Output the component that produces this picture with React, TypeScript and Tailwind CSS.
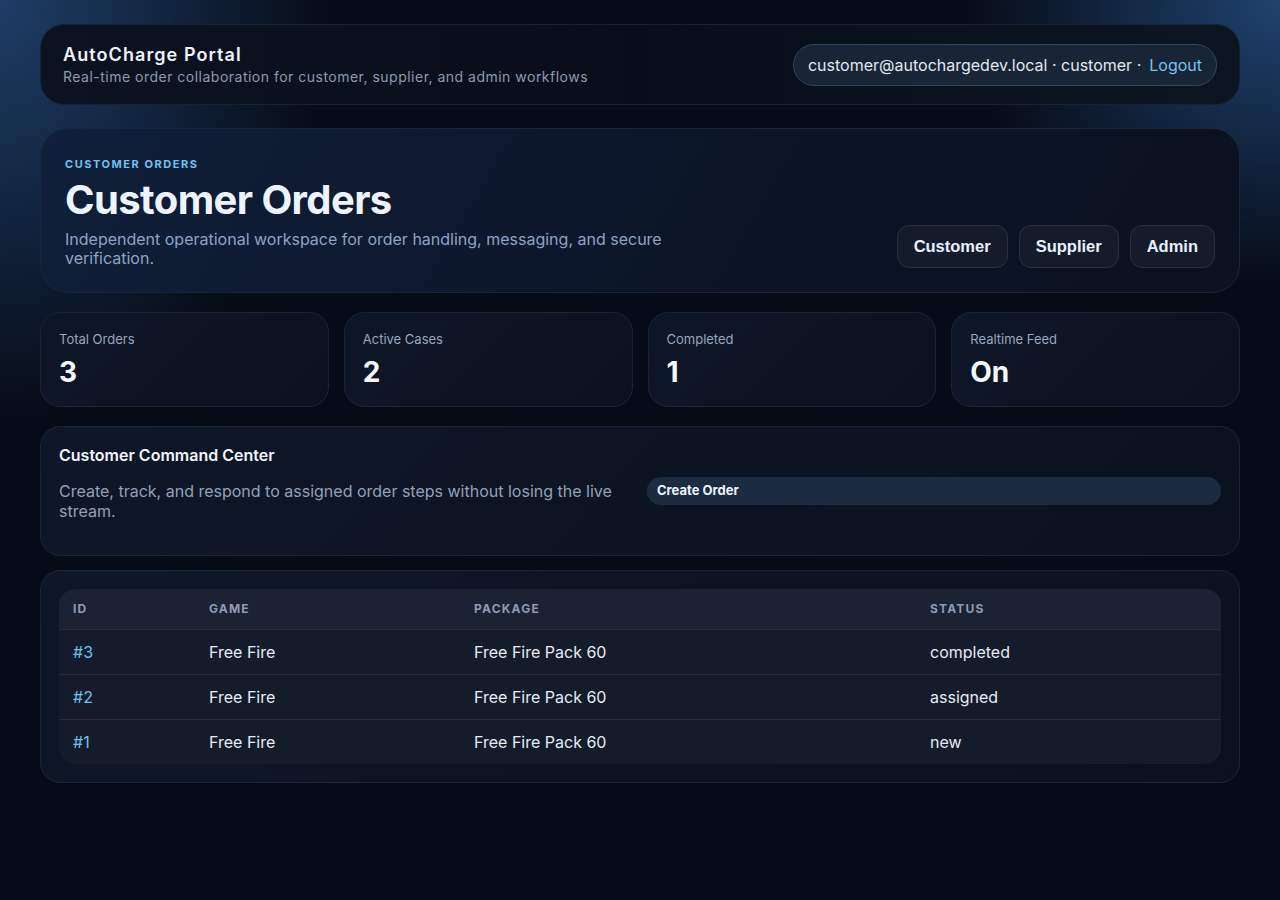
const stats = [
  { label: 'Total Orders', value: '3' },
  { label: 'Active Cases', value: '2' },
  { label: 'Completed', value: '1' },
  { label: 'Realtime Feed', value: 'On' },
]

const orders = [
  { id: '#3', game: 'Free Fire', pack: 'Free Fire Pack 60', status: 'completed' },
  { id: '#2', game: 'Free Fire', pack: 'Free Fire Pack 60', status: 'assigned' },
  { id: '#1', game: 'Free Fire', pack: 'Free Fire Pack 60', status: 'new' },
]

const card =
  'border border-[#1a2436] bg-[linear-gradient(135deg,#0e1729,#0a111e)]'

export default function App() {
  return (
    <div
      className="min-h-screen bg-[#060c17] bg-[radial-gradient(ellipse_440px_560px_at_0%_0%,rgba(34,70,116,0.85),transparent_75%),radial-gradient(ellipse_420px_380px_at_100%_0%,rgba(34,72,120,0.9),transparent_75%)] px-10 pt-6 pb-10 text-[#e2e8f0]"
      style={{ fontFamily: 'Inter, "Noto Sans", sans-serif' }}
    >
      {/* Top bar */}
      <header className="flex h-[81px] items-center justify-between rounded-[24px] border border-[#182233] bg-[linear-gradient(90deg,#0b1321,#070e19_50%,#0c1522)] pl-[22px] pr-[22px]">
        <div>
          <div className="text-[18px] font-semibold leading-6 tracking-[0.06em] text-[#eef3fb]">
            AutoCharge Portal
          </div>
          <div className="text-[14px] leading-5 tracking-[0.035em] text-[#8d9ab0]">
            Real-time order collaboration for customer, supplier, and admin workflows
          </div>
        </div>
        <div className="flex h-[42px] items-center rounded-full border border-[#2b4860] bg-[#172536] px-[14px] text-[16px] text-[#e2e8f0]">
          customer@autochargedev.local · customer ·
          <span className="ml-[8px] text-[#76c2ee]">Logout</span>
        </div>
      </header>

      {/* Hero */}
      <section className="mt-[23px] flex h-[165px] items-end justify-between rounded-[28px] border border-[#1a2538] bg-[linear-gradient(120deg,#10203a,#0b1426_60%,#0a1221)] px-[24px] pb-[24px]">
        <div className="max-w-[640px]">
          <div className="text-[11px] font-bold uppercase leading-4 tracking-[0.14em] text-[#6cc3f0]">
            Customer Orders
          </div>
          <h1 className="mt-[6px] text-[40px] font-bold leading-[44px] tracking-[-0.015em] text-[#eef4ff]">
            Customer Orders
          </h1>
          <p className="mt-[8px] text-[16px] leading-[19px] text-[#8fa3c4]">
            Independent operational workspace for order handling, messaging, and secure
            verification.
          </p>
        </div>
        <div
          className="flex gap-[11px]"
          style={{ fontFamily: '"Liberation Sans", Arial, sans-serif' }}
        >
          {['Customer', 'Supplier', 'Admin'].map((r) => (
            <button
              key={r}
              className="h-[43px] rounded-[12px] border border-[#263244] bg-[#141c2b] px-[16px] text-[16.5px] font-bold text-[#e8f0ff]"
            >
              {r}
            </button>
          ))}
        </div>
      </section>

      {/* Stats */}
      <section className="mt-[19px] grid grid-cols-4 gap-[15px]">
        {stats.map((s) => (
          <div key={s.label} className={`h-[95px] rounded-[20px] px-[18px] pt-[18px] ${card}`}>
            <div className="text-[13px] leading-4 text-[#98a6bd]">{s.label}</div>
            <div className="mt-[9px] text-[28px] font-bold leading-8 text-[#f4f8ff]">
              {s.value}
            </div>
          </div>
        ))}
      </section>

      {/* Command center */}
      <section className={`mt-[19px] rounded-[20px] px-[18px] pt-[18px] pb-[34px] ${card}`}>
        <div className="text-[16px] font-semibold leading-5 text-[#f1f5fb]">
          Customer Command Center
        </div>
        <div className="mt-[16px] grid grid-cols-2 items-start gap-[14px]">
          <p className="text-[16px] leading-[20px] text-[#92a1b8]">
            Create, track, and respond to assigned order steps without losing the live stream.
          </p>
          <button className="mt-[-4px] h-[28px] rounded-full bg-[#1b2b40] px-[10px] text-left text-[13px] font-bold text-[#eef4ff]">
            Create Order
          </button>
        </div>
      </section>

      {/* Orders table */}
      <section className={`mt-[14px] rounded-[20px] p-[18px] ${card}`}>
        <div className="overflow-hidden rounded-[16px] bg-[#141b2a]">
          <table className="w-full table-fixed border-collapse text-left">
            <colgroup>
              <col className="w-[136px]" />
              <col className="w-[265px]" />
              <col className="w-[456px]" />
              <col />
            </colgroup>
            <thead>
              <tr className="h-[40px] bg-[#1a2233]">
                {['ID', 'Game', 'Package', 'Status'].map((h) => (
                  <th
                    key={h}
                    className="px-[14px] text-[12px] font-bold uppercase tracking-[0.1em] text-[#8d9cb6]"
                  >
                    {h}
                  </th>
                ))}
              </tr>
            </thead>
            <tbody>
              {orders.map((o) => (
                <tr key={o.id} className="h-[45px] border-t border-[#242e40]">
                  <td className="px-[14px] text-[16px] text-[#6cc3f0]">{o.id}</td>
                  <td className="px-[14px] text-[16px] text-[#e6ecf5]">{o.game}</td>
                  <td className="px-[14px] text-[16px] text-[#e6ecf5]">{o.pack}</td>
                  <td className="px-[14px] text-[16px] text-[#e6ecf5]">{o.status}</td>
                </tr>
              ))}
            </tbody>
          </table>
        </div>
      </section>
    </div>
  )
}
